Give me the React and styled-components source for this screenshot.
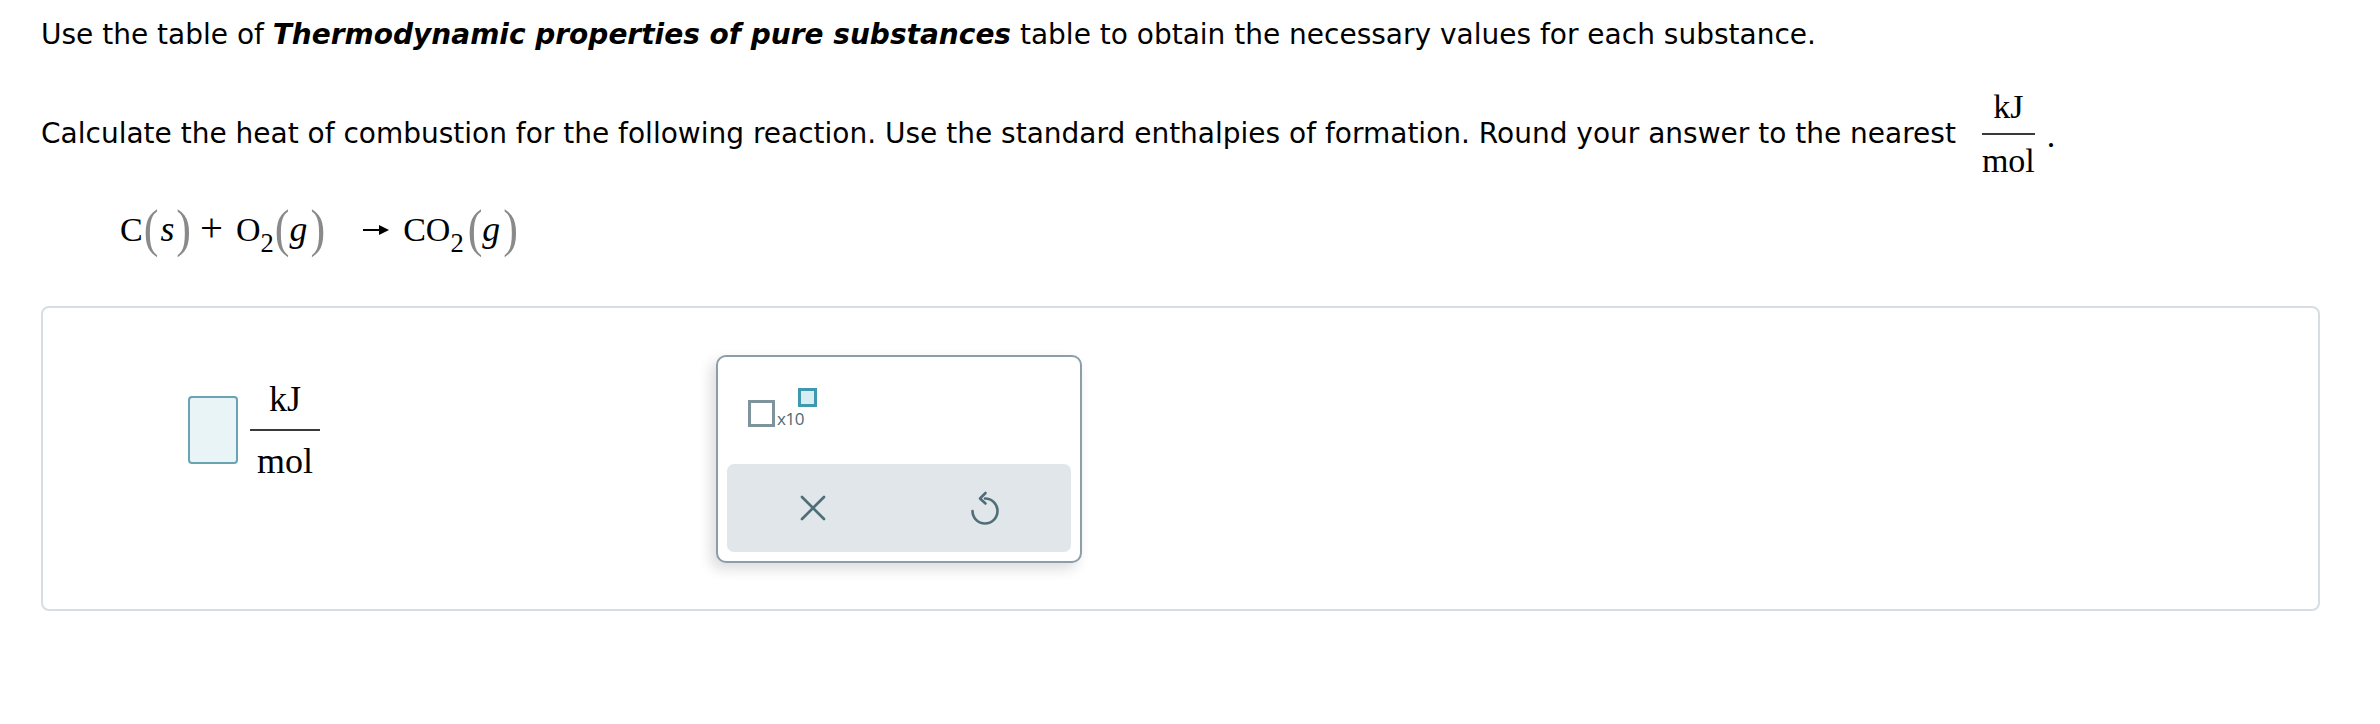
import React from 'react';
import styled, { createGlobalStyle } from 'styled-components';

const GlobalStyle = createGlobalStyle`
  body {
    margin: 0;
    background: #ffffff;
    font-family: "DejaVu Sans", Verdana, sans-serif;
    color: #000000;
  }
`;

const Page = styled.div`
  width: 2380px;
  box-sizing: border-box;
  padding: 20px 60px 0 41px;
`;

const Intro = styled.p`
  margin: 0;
  font-size: 28px;
  line-height: 30px;

  em {
    font-weight: bold;
    font-style: italic;
  }
`;

const Prompt = styled.div`
  display: flex;
  align-items: center;
  margin-top: 40px;
  font-size: 28px;
  line-height: 30px;
`;

const Fraction = styled.span`
  display: inline-flex;
  flex-direction: column;
  align-items: center;
  font-family: "Liberation Serif", "Times New Roman", serif;
  font-size: ${(p) => p.size}px;
  line-height: 1;
  padding: 0 ${(p) => p.pad || 0}px;
  margin: ${(p) => p.margin};
`;

const FracBar = styled.span`
  align-self: stretch;
  height: 2px;
  margin: ${(p) => p.gap}px -${(p) => p.pad || 0}px;
  background: #3a3a3a;
`;

const Period = styled.span`
  font-family: "Liberation Serif", "Times New Roman", serif;
  font-size: 34px;
  position: relative;
  top: 2px;
`;

const Equation = styled.div`
  display: flex;
  align-items: baseline;
  margin: 19px 0 0 79px;
  font-family: "Liberation Serif", "Times New Roman", serif;
  font-size: 34px;
  line-height: 60px;
`;

const Paren = styled.span`
  display: inline-block;
  color: #8a8a8a;
  font-size: 1.3em;
  transform: scaleY(1.2) translateY(2px);
  margin: 0 ${(p) => p.right || 0}px 0 ${(p) => p.left || 0}px;
`;

const Italic = styled.i`
  font-family: "Liberation Serif", "Times New Roman", serif;
  font-style: italic;
  font-size: 1.05em;
`;

const Sub = styled.span`
  font-size: 0.78em;
  position: relative;
  top: 0.4em;
  margin-right: 1px;
`;

const Op = styled.span`
  font-size: 1.2em;
  margin: 0 ${(p) => p.right}px 0 ${(p) => p.left}px;
`;

const Arrow = styled.svg`
  margin: 0 14px 0 38px;
  align-self: center;
`;

const Card = styled.div`
  display: flex;
  align-items: center;
  margin-top: 44px;
  height: 305px;
  box-sizing: border-box;
  border: 2px solid #d6dee2;
  border-radius: 8px;
  padding-left: 145px;
`;

const AnswerRow = styled.div`
  display: flex;
  align-items: center;
  margin-bottom: 58px;
`;

const AnswerBox = styled.div`
  width: 50px;
  height: 68px;
  box-sizing: border-box;
  border: 2px solid #6aa3b2;
  border-radius: 4px;
  background: #e8f4f6;
`;

const Popup = styled.div`
  margin-left: 384px;
  width: 366px;
  height: 208px;
  box-sizing: border-box;
  border: 2px solid #8c9ea7;
  border-radius: 10px;
  background: #ffffff;
  box-shadow: -5px 6px 14px rgba(0, 0, 0, 0.14);
  display: flex;
  flex-direction: column;
  padding: 0 9px 9px 9px;
`;

const SciRow = styled.div`
  flex: 1;
  display: flex;
  align-items: flex-start;
  padding: 31px 0 0 21px;
`;

const Mantissa = styled.div`
  width: 27px;
  height: 27px;
  margin-top: 12px;
  box-sizing: border-box;
  border: 3px solid #7f939c;
`;

const Times10 = styled.span`
  font-family: "Open Sans", "DejaVu Sans", sans-serif;
  font-size: 17px;
  color: #4e6a74;
  margin: 22px 0 0 2px;
  line-height: 17px;
  letter-spacing: -0.5px;
`;

const Exponent = styled.div`
  width: 19px;
  height: 19px;
  margin-left: -6px;
  box-sizing: border-box;
  border: 3px solid #3d98b0;
  background: #d6eef3;
`;

const ButtonBar = styled.div`
  display: flex;
  height: 88px;
  border-radius: 7px;
  background: #e0e6e9;
`;

const IconButton = styled.button`
  flex: 1;
  display: flex;
  align-items: center;
  justify-content: center;
  border: none;
  background: transparent;
  padding: 0;
  cursor: pointer;
  color: #4f6e78;
`;

const App = () => {
  return (
    <Page>
      <GlobalStyle />
      <Intro>
        Use the table of <em>Thermodynamic properties of pure substances</em> table to obtain the
        necessary values for each substance.
      </Intro>

      <Prompt>
        <span>
          Calculate the heat of combustion for the following reaction. Use the standard enthalpies
          of formation. Round your answer to the nearest
        </span>
        <Fraction size={34} margin="0 12px 0 26px">
          <span>kJ</span>
          <FracBar gap={9} />
          <span>mol</span>
        </Fraction>
        <Period>.</Period>
      </Prompt>

      <Equation>
        <span>C</span>
        <Paren left={1} right={2}>(</Paren>
        <Italic>s</Italic>
        <Paren left={2}>)</Paren>
        <Op left={9} right={13}>+</Op>
        <span>O</span>
        <Sub>2</Sub>
        <Paren>(</Paren>
        <Italic>g</Italic>
        <Paren left={3}>)</Paren>
        <Arrow width="26" height="12" viewBox="0 0 26 12">
          <line x1="0" y1="6" x2="18" y2="6" stroke="#000" strokeWidth="2" />
          <polygon points="16,1 26,6 16,11" fill="#000" />
        </Arrow>
        <span>CO</span>
        <Sub>2</Sub>
        <Paren left={3}>(</Paren>
        <Italic>g</Italic>
        <Paren left={3}>)</Paren>
      </Equation>

      <Card>
        <AnswerRow>
          <AnswerBox />
          <Fraction size={36} pad={7} margin="0 12px">
            <span>kJ</span>
            <FracBar gap={12} pad={7} />
            <span>mol</span>
          </Fraction>
        </AnswerRow>

        <Popup>
          <SciRow>
            <Mantissa />
            <Times10>x10</Times10>
            <Exponent />
          </SciRow>
          <ButtonBar>
            <IconButton aria-label="clear">
              <svg width="26" height="26" viewBox="0 0 26 26" fill="none" stroke="currentColor" strokeWidth="2.7" strokeLinecap="round">
                <line x1="2" y1="2" x2="24" y2="24" />
                <line x1="24" y1="2" x2="2" y2="24" />
              </svg>
            </IconButton>
            <IconButton aria-label="undo">
              <svg width="30" height="34" viewBox="0 0 30 34" fill="none" stroke="currentColor" strokeWidth="2.6" strokeLinecap="round" strokeLinejoin="round">
                <path d="M15 7.5 A12.5 12.5 0 1 1 2.5 20" />
                <path d="M15.5 2 L10 7.5 L15.5 12.5" />
              </svg>
            </IconButton>
          </ButtonBar>
        </Popup>
      </Card>
    </Page>
  );
};

export default App;
